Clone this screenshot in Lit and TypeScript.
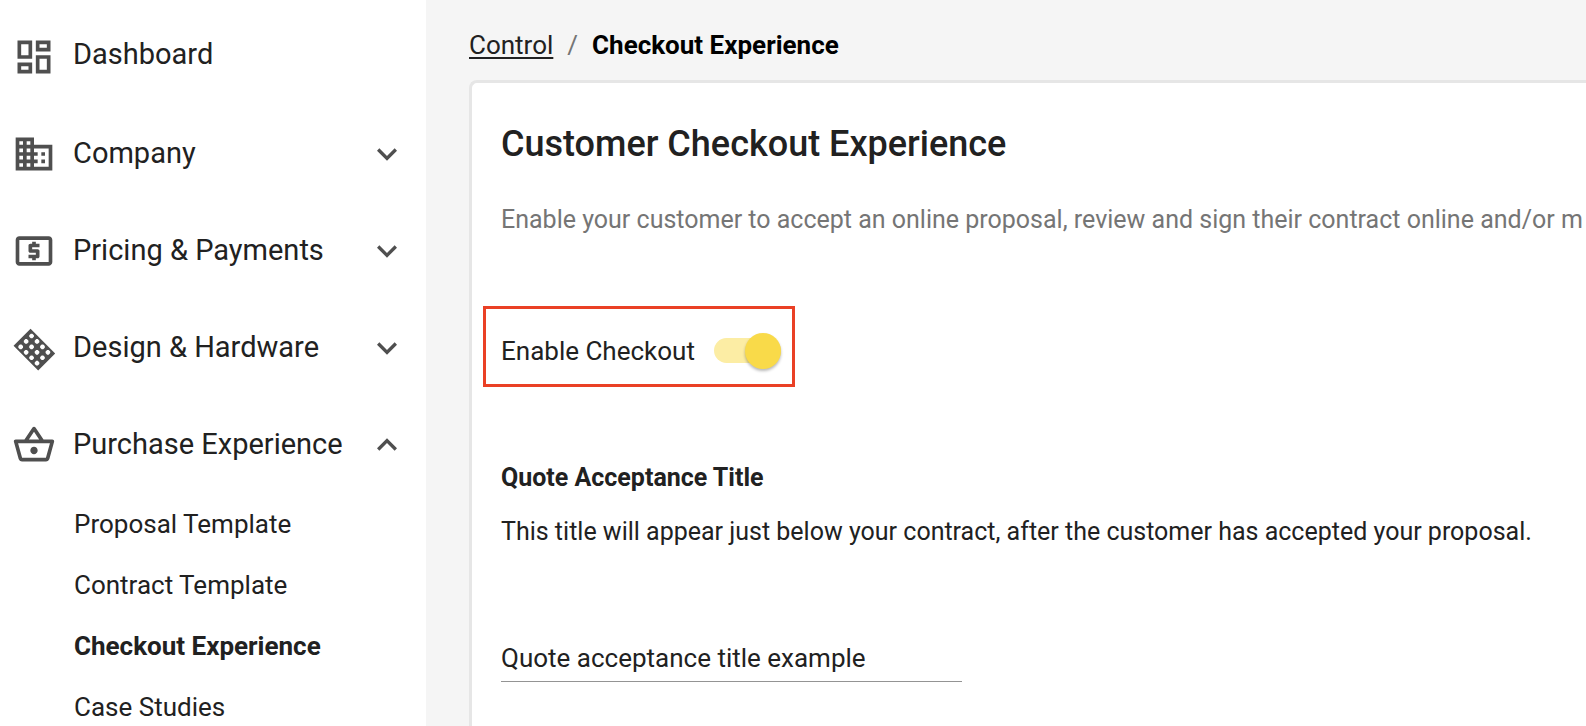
import { LitElement, html, css, svg, nothing } from "lit";
import { customElement, property, state } from "lit/decorators.js";
import { classMap } from "lit/directives/class-map.js";

// A 4 x 3 lattice of rounded cells, cut out of a 19 x 13 panel.
const panelCells = [0, 1, 2]
  .flatMap((row) =>
    [0, 1, 2, 3].map(
      (col) => `M${5.8 + col * 4.2} ${6.65 + row * 4.2}l-.6.6v1.2l.6.6h1.2l.6-.6v-1.2l-.6-.6z`
    )
  )
  .join("");

const icons = {
  dashboard: svg`<path d="M19 5v2h-4V5h4M9 5v6H5V5h4m10 8v6h-4v-6h4M9 17v2H5v-2h4M21 3h-8v6h8V3zM11 3H3v10h8V3zm10 8h-8v10h8V11zm-10 4H3v6h8v-6z"/>`,
  company: svg`<path d="M12 7V3H2v18h20V7H12zM6 19H4v-2h2v2zm0-4H4v-2h2v2zm0-4H4V9h2v2zm0-4H4V5h2v2zm4 12H8v-2h2v2zm0-4H8v-2h2v2zm0-4H8V9h2v2zm0-4H8V5h2v2zm10 12h-8v-2h2v-2h-2v-2h2v-2h-2V9h8v10zm-2-8h-2v2h2v-2zm0 4h-2v2h2v-2z"/>`,
  pricing: svg`<path d="M11 17h2v-1h1c.55 0 1-.45 1-1v-3c0-.55-.45-1-1-1h-3v-1h4V8h-2V7h-2v1h-1c-.55 0-1 .45-1 1v3c0 .55.45 1 1 1h3v1H9v2h2v1zm9-13H4c-1.11 0-1.99.89-1.99 2L2 18c0 1.11.89 2 2 2h16c1.11 0 2-.89 2-2V6c0-1.11-.89-2-2-2zm0 14H4V6h16v12z"/>`,
  design: svg`<path fill-rule="evenodd" transform="rotate(45 12.2 12.9) translate(-.55 .85)" d="${`M3.25 5.5h19v13.1h-19z${panelCells}`}"/>`,
  purchase: svg`<path d="M22 9h-4.79l-4.38-6.56c-.19-.28-.51-.42-.83-.42s-.64.14-.83.43L6.79 9H2c-.55 0-1 .45-1 1 0 .09.01.18.04.27l2.54 9.27c.23.84 1 1.46 1.92 1.46h13c.92 0 1.69-.62 1.93-1.46l2.54-9.27L23 10c0-.55-.45-1-1-1zM12 4.8L14.8 9H9.2L12 4.8zM18.5 19l-12.99.01L3.31 11H20.7l-2.2 8zM12 13c-1.1 0-2 .9-2 2s.9 2 2 2 2-.9 2-2-.9-2-2-2z"/>`,
};

interface Section {
  icon: keyof typeof icons;
  label: string;
  expandable?: boolean;
  children?: string[];
}

const sections: Section[] = [
  { icon: "dashboard", label: "Dashboard" },
  { icon: "company", label: "Company", expandable: true },
  { icon: "pricing", label: "Pricing & Payments", expandable: true },
  { icon: "design", label: "Design & Hardware", expandable: true },
  {
    icon: "purchase",
    label: "Purchase Experience",
    expandable: true,
    children: ["Proposal Template", "Contract Template", "Checkout Experience", "Case Studies"],
  },
];

@customElement("side-nav")
export class SideNav extends LitElement {
  @property() current = "";
  @state() private open = "Purchase Experience";

  static styles = css`
    :host { display: block; background: #fff; color: #212121; }
    ul { list-style: none; margin: 0; padding: 0; }
    .sections { padding-top: 8px; }
    .row {
      box-sizing: border-box;
      display: flex;
      align-items: center;
      gap: 17px;
      width: 100%;
      height: 97px;
      padding: 0 19px 0 12px;
      border: 0;
      background: none;
      color: inherit;
      font: inherit;
      font-size: 29px;
      text-align: left;
      text-decoration: none;
      white-space: nowrap;
      cursor: pointer;
    }
    .label { flex: 1; padding-bottom: 1px; }
    .plain .label { padding-bottom: 5px; }
    .icon { flex: none; width: 44px; height: 44px; fill: #4f4f4f; overflow: visible; }
    .chevron { flex: none; width: 40px; height: 40px; margin-left: -17px; fill: #4f4f4f; }
    .flipped { transform: rotate(180deg); }
    .child {
      display: flex;
      align-items: center;
      height: 61px;
      padding-left: 74px;
      color: inherit;
      font-size: 26px;
      text-decoration: none;
    }
    .current { font-weight: 700; }
  `;

  private renderSection(section: Section) {
    const expanded = this.open === section.label;
    const icon = html`<svg class="icon" viewBox="0 0 24 24" aria-hidden="true">${icons[section.icon]}</svg>`;
    if (!section.expandable) {
      return html`<li><a class="row plain" href="#">${icon}<span class="label">${section.label}</span></a></li>`;
    }
    return html`<li>
      <button
        class="row"
        type="button"
        aria-expanded=${expanded}
        @click=${() => (this.open = expanded ? "" : section.label)}
      >
        ${icon}<span class="label">${section.label}</span>
        <svg class=${classMap({ chevron: true, flipped: expanded })} viewBox="0 0 24 24" aria-hidden="true">
          <path d="M16.59 8.59L12 13.17 7.41 8.59 6 10l6 6 6-6z" />
        </svg>
      </button>
      ${expanded && section.children
        ? html`<ul>
            ${section.children.map(
              (child) => html`<li>
                <a class=${classMap({ child: true, current: child === this.current })} href="#">${child}</a>
              </li>`
            )}
          </ul>`
        : nothing}
    </li>`;
  }

  render() {
    return html`<nav aria-label="Control"><ul class="sections">${sections.map((s) => this.renderSection(s))}</ul></nav>`;
  }
}

@customElement("app-root")
export class AppRoot extends LitElement {
  @state() private checkoutEnabled = true;

  static styles = css`
    :host {
      display: grid;
      grid-template-columns: 426px minmax(0, 1fr);
      height: 100vh;
      overflow: hidden;
      background: #f5f5f5;
      color: #212121;
      font-family: Roboto, sans-serif;
      font-size: 25px;
      line-height: 32px;
    }
    .main {
      display: flex;
      flex-direction: column;
      padding: 29px 0 0 43px;
      min-height: 0;
    }
    .crumbs { display: flex; gap: 14px; margin-bottom: 19px; font-size: 26px; }
    .crumb-link { color: inherit; text-underline-offset: 3px; text-decoration-thickness: 2px; }
    .slash { color: #757575; }
    .here { color: #000; font-weight: 700; }
    .card {
      flex: 1;
      padding: 41px 0 0 29px;
      border: 3px solid #e6e6e6;
      border-width: 3px 0 0 3px;
      border-radius: 8px 0 0 0;
      background: #fff;
      overflow: hidden;
      white-space: nowrap;
    }
    .title { margin: 0; font-size: 36px; font-weight: 500; line-height: 40px; }
    .intro { margin: 40px 0 0; color: #757575; }
    .toggle {
      display: inline-flex;
      align-items: center;
      gap: 19px;
      box-sizing: border-box;
      height: 81px;
      margin: 70px 0 0 -18px;
      padding: 8px 11px 0 15px;
      border: 3px solid #ea4025;
      font-size: 26px;
      cursor: pointer;
    }
    .switch {
      appearance: none;
      display: flex;
      align-items: center;
      width: 67px;
      height: 25px;
      margin: 0;
      border-radius: 13px;
      background: #e0e0e0;
      cursor: pointer;
    }
    .switch::before {
      content: "";
      width: 36px;
      height: 36px;
      border-radius: 50%;
      background: #fafafa;
      box-shadow: 0 2px 3px rgba(0, 0, 0, 0.28);
    }
    .switch:checked { justify-content: flex-end; background: #fceda4; }
    .switch:checked::before { background: #f9da49; }
    .subtitle { margin: 75px 0 0; font-size: 25px; font-weight: 700; line-height: 32px; }
    .note { margin: 22px 0 0; }
    .field {
      display: block;
      box-sizing: border-box;
      width: 461px;
      max-width: 100%;
      height: 48px;
      margin-top: 86px;
      padding: 0;
      border: 0;
      border-bottom: 1px solid #949494;
      border-radius: 0;
      outline: 0;
      background: none;
      color: inherit;
      font: inherit;
      font-size: 26px;
    }
  `;

  render() {
    return html`
      <side-nav current="Checkout Experience"></side-nav>
      <main class="main">
        <nav class="crumbs" aria-label="Breadcrumb">
          <a class="crumb-link" href="#">Control</a>
          <span class="slash">/</span>
          <span class="here">Checkout Experience</span>
        </nav>
        <section class="card">
          <h1 class="title">Customer Checkout Experience</h1>
          <p class="intro">Enable your customer to accept an online proposal, review and sign their contract online and/or m</p>
          <label class="toggle">
            <span>Enable Checkout</span>
            <input
              class="switch"
              type="checkbox"
              role="switch"
              .checked=${this.checkoutEnabled}
              @change=${(e: Event) => (this.checkoutEnabled = (e.target as HTMLInputElement).checked)}
            />
          </label>
          <h2 class="subtitle" id="quote-title">Quote Acceptance Title</h2>
          <p class="note" id="quote-note">This title will appear just below your contract, after the customer has accepted your proposal.</p>
          <input
            class="field"
            type="text"
            aria-labelledby="quote-title"
            aria-describedby="quote-note"
            .value=${"Quote acceptance title example"}
          />
        </section>
      </main>
    `;
  }
}
